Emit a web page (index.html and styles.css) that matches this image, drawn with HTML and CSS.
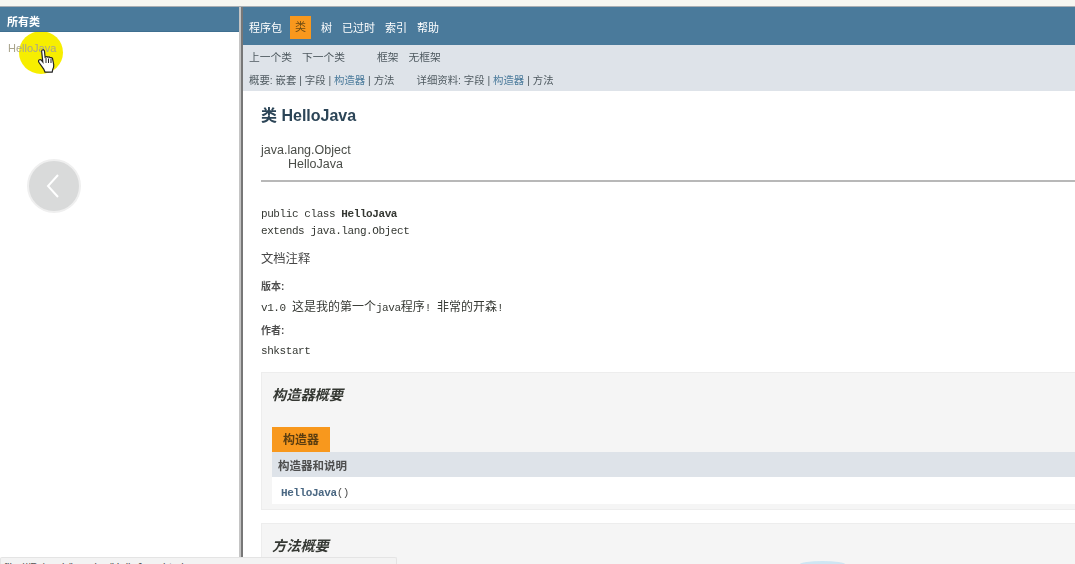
FILE: index.html
```html
<!DOCTYPE html>
<html lang="zh">
<head>
    <meta charset="UTF-8">
    <title>HelloJava</title>
    <link rel="stylesheet" href="styles.css">
</head>
<body>
    <div class="top-strip"></div>

    <div class="frames">
        <aside class="left-frame">
            <div class="left-title">所有类</div>
            <div class="left-list"><a class="class-link">HelloJava</a></div>
        </aside>

        <div class="divider"></div>

        <main class="right-frame">
            <nav class="top-nav">
                <span>程序包</span>
                <span class="active">类</span>
                <span>树</span>
                <span>已过时</span>
                <span>索引</span>
                <span>帮助</span>
            </nav>
            <div class="sub-nav">
                <div class="sub-row">
                    <span>上一个类</span>
                    <span>下一个类</span>
                    <span class="frame-link">框架</span>
                    <span>无框架</span>
                </div>
                <div class="sub-row small">
                    <span>概要: 嵌套 | 字段 | <a>构造器</a> | 方法</span>
                    <span class="detail">详细资料: 字段 | <a>构造器</a> | 方法</span>
                </div>
            </div>

            <div class="content">
                <h2 class="title">类 HelloJava</h2>
                <div class="inherit">java.lang.Object</div>
                <div class="inherit child">HelloJava</div>
                <hr class="rule">

                <pre class="signature">public class <b>HelloJava</b>
extends java.lang.Object</pre>
                <div class="doc">文档注释</div>
                <div class="label">版本:</div>
                <div class="mono-line">v1.0 <span class="cn">这是我的第一个</span>java<span class="cn">程序</span>! <span class="cn">非常的开森</span>!</div>
                <div class="label author">作者:</div>
                <div class="mono-line last">shkstart</div>

                <section class="summary">
                    <h3>构造器概要</h3>
                    <div class="tab">构造器</div>
                    <div class="table-head">构造器和说明</div>
                    <div class="table-row"><code>HelloJava</code><span class="parens">()</span></div>
                </section>

                <section class="summary">
                    <h3>方法概要</h3>
                </section>
            </div>
        </main>
    </div>

    <!-- things floating over the video frame -->
    <div class="highlight"></div>
    <svg class="cursor" width="20" height="26" viewBox="0 0 20 26">
        <path d="M5 2.2c1-.9 2.3-.4 2.5 1l.6 6 .6-.3c.9-.4 1.700-.3 2.200.3.9-.4 1.800-.2 2.200.5 1-.3 2-.1 2.400.8l1.200 6c.3 1.900-.2 3.500-1 5l-.5 2.600H8l-1.300-3L2 14.500c-.8-1.100-.5-2.300.5-2.700.8-.3 1.700 0 2.400 1l.9 1.200L4.700 3.900c-.1-.7 0-1.300.3-1.700z" fill="#fff" stroke="#222" stroke-width="1.200"/>
        <path d="M9 10v5M11.500 10.500V15M14 11v4" stroke="#222" stroke-width="1" fill="none"/>
    </svg>
    <div class="back-btn">
        <svg width="16" height="26" viewBox="0 0 16 26"><path d="M13 2 3 13l10 11" fill="none" stroke="#fff" stroke-width="2"/></svg>
    </div>
    <div class="status-bar">file:///D:/work/javadoc/HelloJava.html</div>
    <div class="dome"></div>
</body>
</html>
```

FILE: styles.css
```css
html {
    overflow: hidden;
}

body {
    margin: 0;
    padding: 0;
    height: 564px;
    overflow: hidden;
    background-color: #fff;
    font-family: "Liberation Sans", "Noto Sans CJK SC", sans-serif;
    color: #353833;
    position: relative;
}

.top-strip {
    height: 6px;
    background-color: #f6f6f1;
    border-bottom: 1px solid #a9aeb3;
}

.frames {
    display: flex;
    height: 557px;
    overflow: hidden;
    filter: blur(0.35px);
}

.left-frame {
    width: 239px;
    flex: none;
}

.left-title {
    height: 25px;
    box-sizing: border-box;
    padding: 5px 0 0 7px;
    line-height: 20px;
    background-color: #4a7a9b;
    color: #fff;
    font-size: 11px;
    font-weight: bold;
    border-bottom: 1px solid #3f6f90;
}

.left-list {
    padding: 8px 8px;
    font-size: 11px;
    line-height: 16px;
}

.class-link {
    color: #a9a48c;
}

.divider {
    width: 4px;
    flex: none;
    background-color: #c4c4c4;
    border-right: 2px solid #777;
    box-sizing: border-box;
}

.right-frame {
    flex: 1;
    min-width: 0;
}

.top-nav {
    height: 38px;
    background-color: #4a7a9b;
    color: #fff;
    font-size: 11px;
    display: flex;
    align-items: center;
    padding: 2px 0 0 6px;
    box-sizing: border-box;
    gap: 10px;
}

.top-nav .active {
    background-color: #f8981d;
    color: #6b4a12;
    height: 23px;
    line-height: 23px;
    padding: 0 5px;
    margin-left: -2px;
}

.sub-nav {
    height: 46px;
    background-color: #dee3e9;
    font-size: 10.750px;
    color: #4f5a60;
    padding-left: 6px;
}

.sub-row {
    display: flex;
    height: 23px;
    align-items: center;
    gap: 10px;
}

.sub-row.small {
    font-size: 10.400px;
}

.sub-row a {
    color: #4a7a9b;
}

.frame-link {
    margin-left: 22px;
}

.detail {
    margin-left: 12px;
}

.content {
    padding: 0 0 0 18px;
}

.title {
    margin: 0;
    padding-top: 15px;
    height: 37px;
    font-size: 16px;
    line-height: 20px;
    color: #2c4557;
}

.inherit {
    font-size: 12.500px;
    line-height: 14px;
    color: #4a4d48;
}

.inherit.child {
    padding-left: 27px;
}

.rule {
    margin: 9px 0 0;
    border: none;
    border-top: 2px solid #b8b8b8;
}

.signature {
    margin: 24px 0 0;
    font-family: "Liberation Mono", "Noto Sans CJK SC", monospace;
    font-size: 11px;
    letter-spacing: -0.42px;
    line-height: 17px;
    color: #353833;
}

.doc {
    margin-top: 11px;
    font-size: 12.300px;
    line-height: 16px;
    color: #474747;
}

.label {
    margin-top: 13px;
    font-size: 10px;
    line-height: 14px;
    font-weight: bold;
    color: #4e4e4e;
}

.label.author {
    margin-top: 8px;
}

.mono-line {
    margin-top: 6px;
    font-family: "Liberation Mono", "Noto Sans CJK SC", monospace;
    font-size: 11px;
    letter-spacing: -0.42px;
    line-height: 16px;
    color: #353833;
}

.mono-line .cn {
    font-size: 12px;
    letter-spacing: 0;
}

.mono-line.last {
    margin-top: 5px;
}

.summary {
    margin-top: 13px;
    background-color: #f5f5f5;
    border: 1px solid #ededed;
    border-right: none;
    padding: 0 0 0 10px;
    height: 138px;
    box-sizing: border-box;
}

.summary + .summary {
    margin-top: 13px;
}

.summary h3 {
    margin: 0;
    height: 54px;
    padding-top: 13px;
    box-sizing: border-box;
    font-size: 14.200px;
    line-height: 18px;
    font-style: italic;
    color: #353833;
}

.tab {
    width: 58px;
    height: 25px;
    line-height: 26px;
    text-align: center;
    background-color: #f8981d;
    color: #5a3d10;
    font-size: 12px;
    font-weight: bold;
}

.table-head {
    height: 25px;
    line-height: 28px;
    background-color: #dee3e9;
    padding-left: 6px;
    font-size: 11.500px;
    font-weight: bold;
    color: #4e4e4e;
}

.table-row {
    height: 27px;
    line-height: 32px;
    background-color: #fff;
    padding-left: 9px;
    font-family: "Liberation Mono", monospace;
    font-size: 11px;
    letter-spacing: -0.42px;
}

.table-row code {
    font-family: inherit;
    font-weight: bold;
    color: #4a6782;
}

.parens {
    color: #4e4e4e;
}

.highlight {
    position: absolute;
    left: 19px;
    top: 31px;
    width: 44px;
    height: 43px;
    border-radius: 50%;
    background-color: #f7ee00;
    z-index: -1;
}

.cursor {
    position: absolute;
    left: 37px;
    top: 48px;
}

.back-btn {
    position: absolute;
    left: 27px;
    top: 159px;
    width: 50px;
    height: 50px;
    border-radius: 50%;
    background-color: #d9dada;
    border: 2px solid #efefef;
    display: flex;
    align-items: center;
    justify-content: center;
    padding-right: 0;
}

.back-btn svg {
    margin-right: 2px;
}

.status-bar {
    position: absolute;
    left: 0;
    top: 557px;
    width: 397px;
    height: 7px;
    box-sizing: border-box;
    padding: 2px 0 0 3px;
    background-color: #f3f3f3;
    border: 1px solid #e4e4e4;
    border-bottom: none;
    border-radius: 2px 2px 0 0;
    font-size: 11px;
    line-height: 14px;
    color: #555;
    overflow: hidden;
    white-space: nowrap;
}

.dome {
    position: absolute;
    left: 800px;
    top: 561px;
    width: 45px;
    height: 3px;
    border-radius: 50% 50% 0 0 / 100% 100% 0 0;
    background-color: #cfe6f3;
}
```
